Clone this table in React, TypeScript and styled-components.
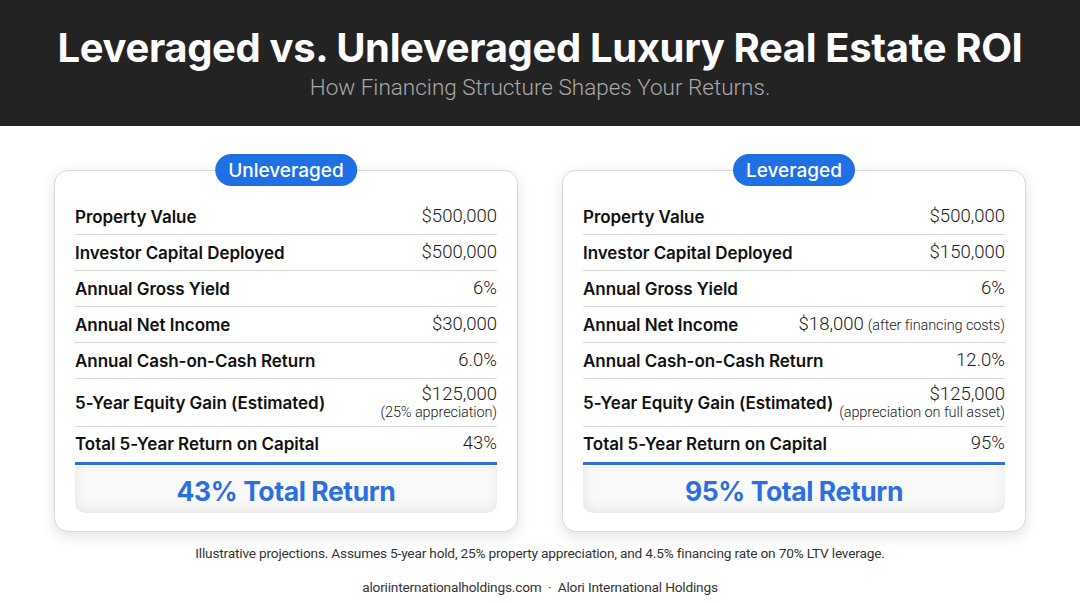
import React from "react";
import styled, { createGlobalStyle } from "styled-components";

const Global = createGlobalStyle`
  html, body { margin: 0; padding: 0; background: #ffffff; }
  body { font-family: "Inter", "Roboto", sans-serif; width: 1080px; height: 603px; overflow: hidden; }
`;

const Page = styled.div`
  width: 1080px;
  height: 603px;
  display: flex;
  flex-direction: column;
  background: #ffffff;
`;

const Header = styled.header`
  height: 126px;
  background: #232323;
  display: flex;
  flex-direction: column;
  align-items: center;
  justify-content: center;
  box-sizing: border-box;
  padding-bottom: 2px;
`;

const Title = styled.h1`
  margin: 0;
  color: #ffffff;
  font-family: "Inter", sans-serif;
  font-weight: 700;
  font-size: 40px;
  letter-spacing: -0.35px;
  line-height: 50px;
`;

const Subtitle = styled.p`
  margin: 0;
  color: #a9a9a9;
  font-family: "Roboto", sans-serif;
  font-weight: 300;
  font-size: 22.5px;
  letter-spacing: 0px;
  line-height: 28px;
`;

const Cards = styled.main`
  display: grid;
  grid-template-columns: 464px 464px;
  gap: 44px;
  justify-content: center;
  padding-top: 44px;
`;

const Card = styled.section`
  position: relative;
  height: 362px;
  box-sizing: border-box;
  border: 1px solid #d9d9d9;
  border-radius: 14px;
  background: #ffffff;
  box-shadow: 0 4px 14px rgba(0, 0, 0, 0.12);
  padding: 28px 20px 18px 20px;
  display: flex;
  flex-direction: column;
`;

const Badge = styled.div`
  position: absolute;
  top: -17px;
  left: 50%;
  transform: translateX(-50%);
  height: 32px;
  padding: 0 13px;
  border-radius: 16px;
  background: #1f6fe5;
  color: #ffffff;
  font-family: "Inter", sans-serif;
  font-weight: 500;
  font-size: 19px;
  display: flex;
  align-items: center;
  white-space: nowrap;
`;

const Row = styled.div<{ $tall?: boolean; $last?: boolean }>`
  height: ${(p) => (p.$tall ? 48 : p.$last ? 38 : 36)}px;
  box-sizing: border-box;
  display: flex;
  align-items: center;
  justify-content: space-between;
  border-bottom: ${(p) => (p.$last ? "3px solid #2f6fe0" : "1px solid #d6d6d6")};
  padding-bottom: ${(p) => (p.$last ? 2 : 0)}px;
`;

const Label = styled.span`
  font-family: "Inter", sans-serif;
  font-weight: 600;
  font-size: 17px;
  letter-spacing: -0.05px;
  color: #111111;
`;

const Value = styled.span`
  display: flex;
  flex-direction: column;
  align-items: flex-end;
  font-family: "Roboto", sans-serif;
  font-weight: 300;
  font-size: 18.5px;
  color: #1a1a1a;
  line-height: 19px;
  text-align: right;
`;

const Note = styled.span`
  font-size: 14.5px;
  line-height: 17px;
  color: #222222;
  letter-spacing: -0.1px;
`;

const InlineNote = styled.span`
  font-size: 14.5px;
  color: #222222;
  letter-spacing: -0.1px;
  margin-left: 4px;
`;

const ValueLine = styled.span`
  display: flex;
  align-items: baseline;
`;

const TotalBox = styled.div`
  margin-top: 1px;
  height: 47px;
  border-radius: 0 0 10px 10px;
  background: #f9f9f9;
  box-shadow: inset 0 -7px 10px rgba(0, 0, 0, 0.035), inset 5px 0 8px rgba(0, 0, 0, 0.03),
    inset -5px 0 8px rgba(0, 0, 0, 0.02);
  display: flex;
  align-items: center;
  justify-content: center;
  font-family: "Inter", sans-serif;
  font-weight: 700;
  font-size: 26.5px;
  letter-spacing: -0.4px;
  color: #2c6fe0;
  padding-top: 2px;
  box-sizing: border-box;
`;

const Footer = styled.footer`
  display: flex;
  flex-direction: column;
  align-items: center;
  padding-top: 13px;
  gap: 18px;
  font-family: "Roboto", sans-serif;
  font-size: 13.7px;
  color: #333333;
  letter-spacing: -0.2px;
`;

type RowData = { label: string; value: string; note?: string; inline?: boolean };

const unlev: RowData[] = [
  { label: "Property Value", value: "$500,000" },
  { label: "Investor Capital Deployed", value: "$500,000" },
  { label: "Annual Gross Yield", value: "6%" },
  { label: "Annual Net Income", value: "$30,000" },
  { label: "Annual Cash-on-Cash Return", value: "6.0%" },
  { label: "5-Year Equity Gain (Estimated)", value: "$125,000", note: "(25% appreciation)" },
  { label: "Total 5-Year Return on Capital", value: "43%" },
];

const lev: RowData[] = [
  { label: "Property Value", value: "$500,000" },
  { label: "Investor Capital Deployed", value: "$150,000" },
  { label: "Annual Gross Yield", value: "6%" },
  { label: "Annual Net Income", value: "$18,000", note: "(after financing costs)", inline: true },
  { label: "Annual Cash-on-Cash Return", value: "12.0%" },
  { label: "5-Year Equity Gain (Estimated)", value: "$125,000", note: "(appreciation on full asset)" },
  { label: "Total 5-Year Return on Capital", value: "95%" },
];

function ScenarioCard({ title, rows, total }: { title: string; rows: RowData[]; total: string }) {
  return (
    <Card>
      <Badge>{title}</Badge>
      {rows.map((r, i) => (
        <Row key={r.label} $tall={!!r.note && !r.inline} $last={i === rows.length - 1}>
          <Label>{r.label}</Label>
          <Value>
            {r.inline ? (
              <ValueLine>
                {r.value}
                <InlineNote>{r.note}</InlineNote>
              </ValueLine>
            ) : (
              <>
                <span>{r.value}</span>
                {r.note && <Note>{r.note}</Note>}
              </>
            )}
          </Value>
        </Row>
      ))}
      <TotalBox>{total}</TotalBox>
    </Card>
  );
}

export default function App() {
  return (
    <Page>
      <Global />
      <Header>
        <Title>Leveraged vs. Unleveraged Luxury Real Estate ROI</Title>
        <Subtitle>How Financing Structure Shapes Your Returns.</Subtitle>
      </Header>
      <Cards>
        <ScenarioCard title="Unleveraged" rows={unlev} total="43% Total Return" />
        <ScenarioCard title="Leveraged" rows={lev} total="95% Total Return" />
      </Cards>
      <Footer>
        <span>Illustrative projections. Assumes 5-year hold, 25% property appreciation, and 4.5% financing rate on 70% LTV leverage.</span>
        <span>aloriinternationalholdings.com &nbsp;·&nbsp; Alori International Holdings</span>
      </Footer>
    </Page>
  );
}
